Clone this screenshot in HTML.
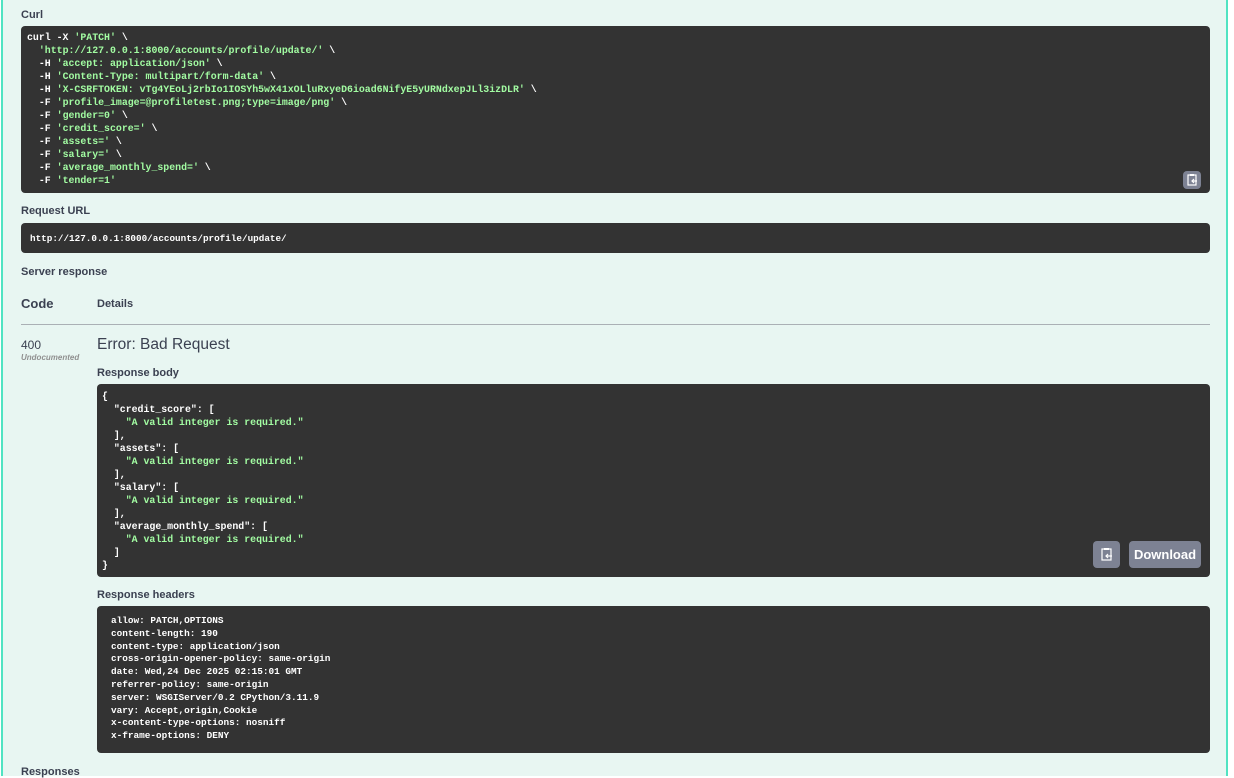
<!DOCTYPE html>
<html><head><meta charset="utf-8"><style>
*{margin:0;padding:0;box-sizing:border-box}
body{width:1234px;height:776px;overflow:hidden;background:#fff;font-family:"Liberation Sans",sans-serif;color:#3b4151}
.wrap{position:absolute;left:1px;top:0;width:1227px;height:776px;background:#e8f6f2;border-left:2px solid #50e3c2;border-right:2px solid #50e3c2}
.lbl{position:absolute;font-size:11px;font-weight:bold;color:#3b4151}
.blk{position:absolute;background:#333;border-radius:4px;font-family:"Liberation Mono",monospace;font-size:9.9px;font-weight:bold;line-height:13px;color:#fff;white-space:pre}
.g{color:#a2fca2}
.btn{position:absolute;background:#7d8293;border-radius:4px}
</style></head><body>
<div class="wrap"></div>
<div class="lbl" style="left:21px;top:9px">Curl</div>
<div class="blk" style="left:21px;top:26px;width:1189px;height:167px;padding:5px 6px"><span>curl -X <span class="g">'PATCH'</span> \
  <span class="g">'http://127.0.0.1:8000/accounts/profile/update/'</span> \
  -H <span class="g">'accept: application/json'</span> \
  -H <span class="g">'Content-Type: multipart/form-data'</span> \
  -H <span class="g">'X-CSRFTOKEN: vTg4YEoLj2rbIo1IOSYh5wX41xOLluRxyeD6ioad6NifyE5yURNdxepJLl3izDLR'</span> \
  -F <span class="g">'profile_image=@profiletest.png;type=image/png'</span> \
  -F <span class="g">'gender=0'</span> \
  -F <span class="g">'credit_score='</span> \
  -F <span class="g">'assets='</span> \
  -F <span class="g">'salary='</span> \
  -F <span class="g">'average_monthly_spend='</span> \
  -F <span class="g">'tender=1'</span></span></div>
<div class="btn" style="left:1183px;top:171px;width:18px;height:18px"><svg width="18" height="18" viewBox="0 0 18 18"><rect x="5" y="4" width="8" height="10" fill="none" stroke="#fff" stroke-width="1.2"/><rect x="7" y="3" width="4" height="2" fill="#fff"/><path d="M9 10h5M11 8l-2 2 2 2" stroke="#fff" fill="none" stroke-width="1.2"/></svg></div>
<div class="lbl" style="left:21px;top:205px">Request URL</div>
<div class="blk" style="left:21px;top:223px;width:1189px;height:30px;padding:9px 9px;font-size:9.3px">http://127.0.0.1:8000/accounts/profile/update/</div>
<div class="lbl" style="left:21px;top:266px">Server response</div>
<div style="position:absolute;left:21px;top:296px;font-size:13px;font-weight:bold">Code</div>
<div class="lbl" style="left:97px;top:298px">Details</div>
<div style="position:absolute;left:21px;top:324px;width:1189px;height:1px;background:#aab0b5"></div>
<div style="position:absolute;left:21px;top:338px;font-size:12px">400</div>
<div style="position:absolute;left:21px;top:353px;font-size:8px;font-style:italic;color:#909090;font-weight:bold">Undocumented</div>
<div style="position:absolute;left:97px;top:336px;font-size:15.5px">Error: Bad Request</div>
<div class="lbl" style="left:97px;top:367px">Response body</div>
<div class="blk" style="left:97px;top:384px;width:1113px;height:193px;padding:6px 5px">{
  "credit_score": [
    <span class="g">"A valid integer is required."</span>
  ],
  "assets": [
    <span class="g">"A valid integer is required."</span>
  ],
  "salary": [
    <span class="g">"A valid integer is required."</span>
  ],
  "average_monthly_spend": [
    <span class="g">"A valid integer is required."</span>
  ]
}</div>
<div class="btn" style="left:1093px;top:541px;width:27px;height:27px"><svg width="27" height="27" viewBox="0 0 27 27"><rect x="9" y="8" width="9" height="11" fill="none" stroke="#fff" stroke-width="1.2"/><rect x="11" y="7" width="5" height="2" fill="#fff"/><path d="M13 15h6M15 13l-2 2 2 2" stroke="#fff" fill="none" stroke-width="1.2"/></svg></div>
<div class="btn" style="left:1129px;top:541px;width:72px;height:27px;color:#fff;font-size:13px;font-weight:bold;text-align:center;line-height:27px">Download</div>
<div class="lbl" style="left:97px;top:589px">Response headers</div>
<div class="blk" style="left:97px;top:606px;width:1113px;height:147px;padding:9px 14px;font-size:9.4px;line-height:12.8px">allow: PATCH,OPTIONS
content-length: 190
content-type: application/json
cross-origin-opener-policy: same-origin
date: Wed,24 Dec 2025 02:15:01 GMT
referrer-policy: same-origin
server: WSGIServer/0.2 CPython/3.11.9
vary: Accept,origin,Cookie
x-content-type-options: nosniff
x-frame-options: DENY</div>
<div class="lbl" style="left:21px;top:766px">Responses</div>
</body></html>
